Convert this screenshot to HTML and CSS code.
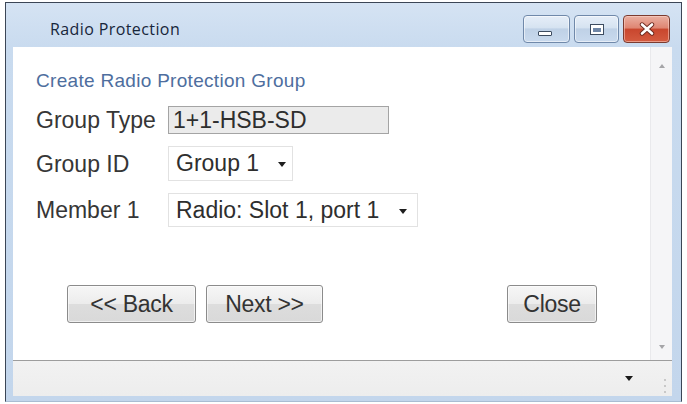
FILE: index.html
```html
<!DOCTYPE html>
<html>
<head>
<meta charset="utf-8">
<link rel="stylesheet" href="styles.css">
</head>
<body>
<div class="window">
  <div class="titlebar">
    <div class="title">Radio Protection</div>
    <div class="wbtns">
      <div class="wbtn"><span class="min-icon"></span></div>
      <div class="wbtn"><span class="max-icon"></span></div>
      <div class="wbtn close">
        <svg width="18" height="14" viewBox="0 0 18 14">
          <path d="M4 2.5 L14 11.5 M14 2.5 L4 11.5" stroke="#6b2a20" stroke-width="4.4" stroke-linecap="round"/>
          <path d="M4 2.5 L14 11.5 M14 2.5 L4 11.5" stroke="#ffffff" stroke-width="2.6" stroke-linecap="round"/>
        </svg>
      </div>
    </div>
  </div>
  <div class="client">
    <div class="main">
      <div class="content">
        <div class="heading">Create Radio Protection Group</div>
        <div class="form">
          <div class="label">Group Type</div>
          <div class="field">1+1-HSB-SD</div>
          <div class="label">Group ID</div>
          <div class="select sel-id"><span>Group 1</span><i class="caret"></i></div>
          <div class="label">Member 1</div>
          <div class="select sel-member"><span>Radio: Slot 1, port 1</span><i class="caret"></i></div>
        </div>
        <div class="actions">
          <button class="btn btn-back">&lt;&lt; Back</button>
          <button class="btn btn-next">Next &gt;&gt;</button>
          <button class="btn btn-close">Close</button>
        </div>
      </div>
      <div class="scrollbar">
        <i class="arrow-up"></i>
        <i class="arrow-down"></i>
      </div>
    </div>
    <div class="status">
      <i class="status-caret"></i>
      <div class="grip">
        <span></span><span></span><span></span>
      </div>
    </div>
  </div>
</div>
</body>
</html>
```

FILE: styles.css
```css
html, body {
  margin: 0;
  padding: 0;
  background: #ffffff;
}

body {
  width: 687px;
  height: 404px;
  overflow: hidden;
  font-family: "Liberation Sans", Arial, sans-serif;
}

.window {
  margin: 2px 0 0 5px;
  width: 677px;
  height: 400px;
  box-sizing: border-box;
  border: 1px solid #3b4656;
  border-bottom-color: #a9bdd3;
  background: linear-gradient(#d5e3f3 0px, #c9dbef 44px, #c3d6ec 100%);
  display: flex;
  flex-direction: column;
  padding-bottom: 5px;
}

.titlebar {
  height: 44px;
  flex: none;
  display: flex;
  justify-content: space-between;
  align-items: flex-start;
  padding: 0 11px 0 44px;
}

.title {
  margin-top: 16px;
  font-family: "Open Sans", "Noto Sans", sans-serif;
  font-size: 16px;
  line-height: 21px;
  letter-spacing: 0.4px;
  color: #17263b;
}

.wbtns {
  display: flex;
  gap: 4px;
  margin-top: 12px;
}

.wbtn {
  width: 47px;
  height: 28px;
  box-sizing: border-box;
  border: 1px solid #7089aa;
  border-radius: 4px;
  background: linear-gradient(#e6eef8 0%, #d6e3f1 45%, #bfd1e6 50%, #c9daee 100%);
  box-shadow: inset 0 0 0 1px rgba(255, 255, 255, 0.55);
  display: flex;
  align-items: center;
  justify-content: center;
}

.wbtn:nth-child(2) {
  width: 45px;
}

.min-icon {
  width: 12px;
  height: 3px;
  margin-top: 8px;
  margin-right: 4px;
  background: #ffffff;
  border: 1px solid #3d4c60;
  border-radius: 1px;
}

.max-icon {
  width: 8px;
  height: 4px;
  border: 2px solid #ffffff;
  border-top-width: 3px;
  background: #6f86a6;
  outline: 1px solid #3d4c60;
}

.wbtn.close {
  border-color: #7b3b30;
  background: linear-gradient(#eab0a2 0%, #df8673 45%, #c9472e 52%, #d45b40 100%);
  box-shadow: inset 0 0 0 1px rgba(255, 220, 210, 0.5);
}

.client {
  flex: 1;
  margin: 0 9px 0 7px;
  display: flex;
  flex-direction: column;
}

.main {
  flex: 1;
  display: flex;
  background: #ffffff;
}

.content {
  flex: 1;
  padding: 23px 0 0 23px;
}

.heading {
  font-size: 19px;
  line-height: 22px;
  letter-spacing: 0.3px;
  color: #4e6e9e;
}

.form {
  margin-top: 14px;
  display: grid;
  grid-template-columns: 132px auto;
  grid-template-rows: 28px 35px 34px;
  row-gap: 12px;
  align-items: center;
  justify-items: start;
  font-size: 23px;
  color: #363636;
}

.label {
  line-height: 26px;
}

.field {
  width: 221px;
  height: 28px;
  box-sizing: border-box;
  border: 1px solid #a4a4a4;
  background: #ebebeb;
  padding-left: 4px;
  line-height: 26px;
  color: #2e2e2e;
}

.select {
  height: 100%;
  box-sizing: border-box;
  border: 1px solid #e2e2e2;
  background: #ffffff;
  display: flex;
  align-items: center;
  justify-content: space-between;
  padding: 0 6px 0 7px;
  color: #2e2e2e;
}

.sel-id {
  width: 125px;
}

.sel-member {
  width: 250px;
  padding-right: 10px;
}

.caret {
  width: 0;
  height: 0;
  border-left: 4px solid transparent;
  border-right: 4px solid transparent;
  border-top: 5px solid #1e1e1e;
  margin-top: 2px;
}

.actions {
  margin: 58px 53px 0 31px;
  display: flex;
  gap: 10px;
}

.btn {
  height: 38px;
  box-sizing: border-box;
  border: 1px solid #8b8b8b;
  border-radius: 3px;
  background: linear-gradient(#f6f6f6 0%, #ececec 50%, #dddddd 51%, #d9d9d9 100%);
  box-shadow: inset 0 0 0 1px rgba(255, 255, 255, 0.6);
  font-family: "Liberation Sans", Arial, sans-serif;
  font-size: 23px;
  color: #333333;
  padding: 0;
  letter-spacing: -0.3px;
}

.btn-back {
  width: 129px;
}

.btn-next {
  width: 117px;
}

.btn-close {
  width: 90px;
  margin-left: auto;
}

.scrollbar {
  width: 22px;
  flex: none;
  box-sizing: border-box;
  background: #f5f5f7;
  border-left: 1px solid #e9e9ec;
  display: flex;
  flex-direction: column;
  justify-content: space-between;
  align-items: center;
  padding: 17px 0 11px;
}

.arrow-up {
  width: 0;
  height: 0;
  border-left: 3px solid transparent;
  border-right: 3px solid transparent;
  border-bottom: 4px solid #a5a5a8;
}

.arrow-down {
  width: 0;
  height: 0;
  border-left: 3px solid transparent;
  border-right: 3px solid transparent;
  border-top: 4px solid #a5a5a8;
}

.status {
  height: 36px;
  box-sizing: border-box;
  border-top: 1px solid #9d9d9d;
  background: linear-gradient(#f2f2f2, #ededed);
  display: flex;
  align-items: center;
  justify-content: flex-end;
  padding: 0 4px 0 0;
}

.status-caret {
  width: 0;
  height: 0;
  border-left: 4px solid transparent;
  border-right: 4px solid transparent;
  border-top: 5px solid #1a1a1a;
  margin-right: 31px;
}

.grip {
  width: 4px;
  height: 14px;
  margin-top: 14px;
  display: flex;
  flex-direction: column;
  justify-content: space-between;
}

.grip span {
  width: 2px;
  height: 2px;
  background: #c8c8c8;
}
```
